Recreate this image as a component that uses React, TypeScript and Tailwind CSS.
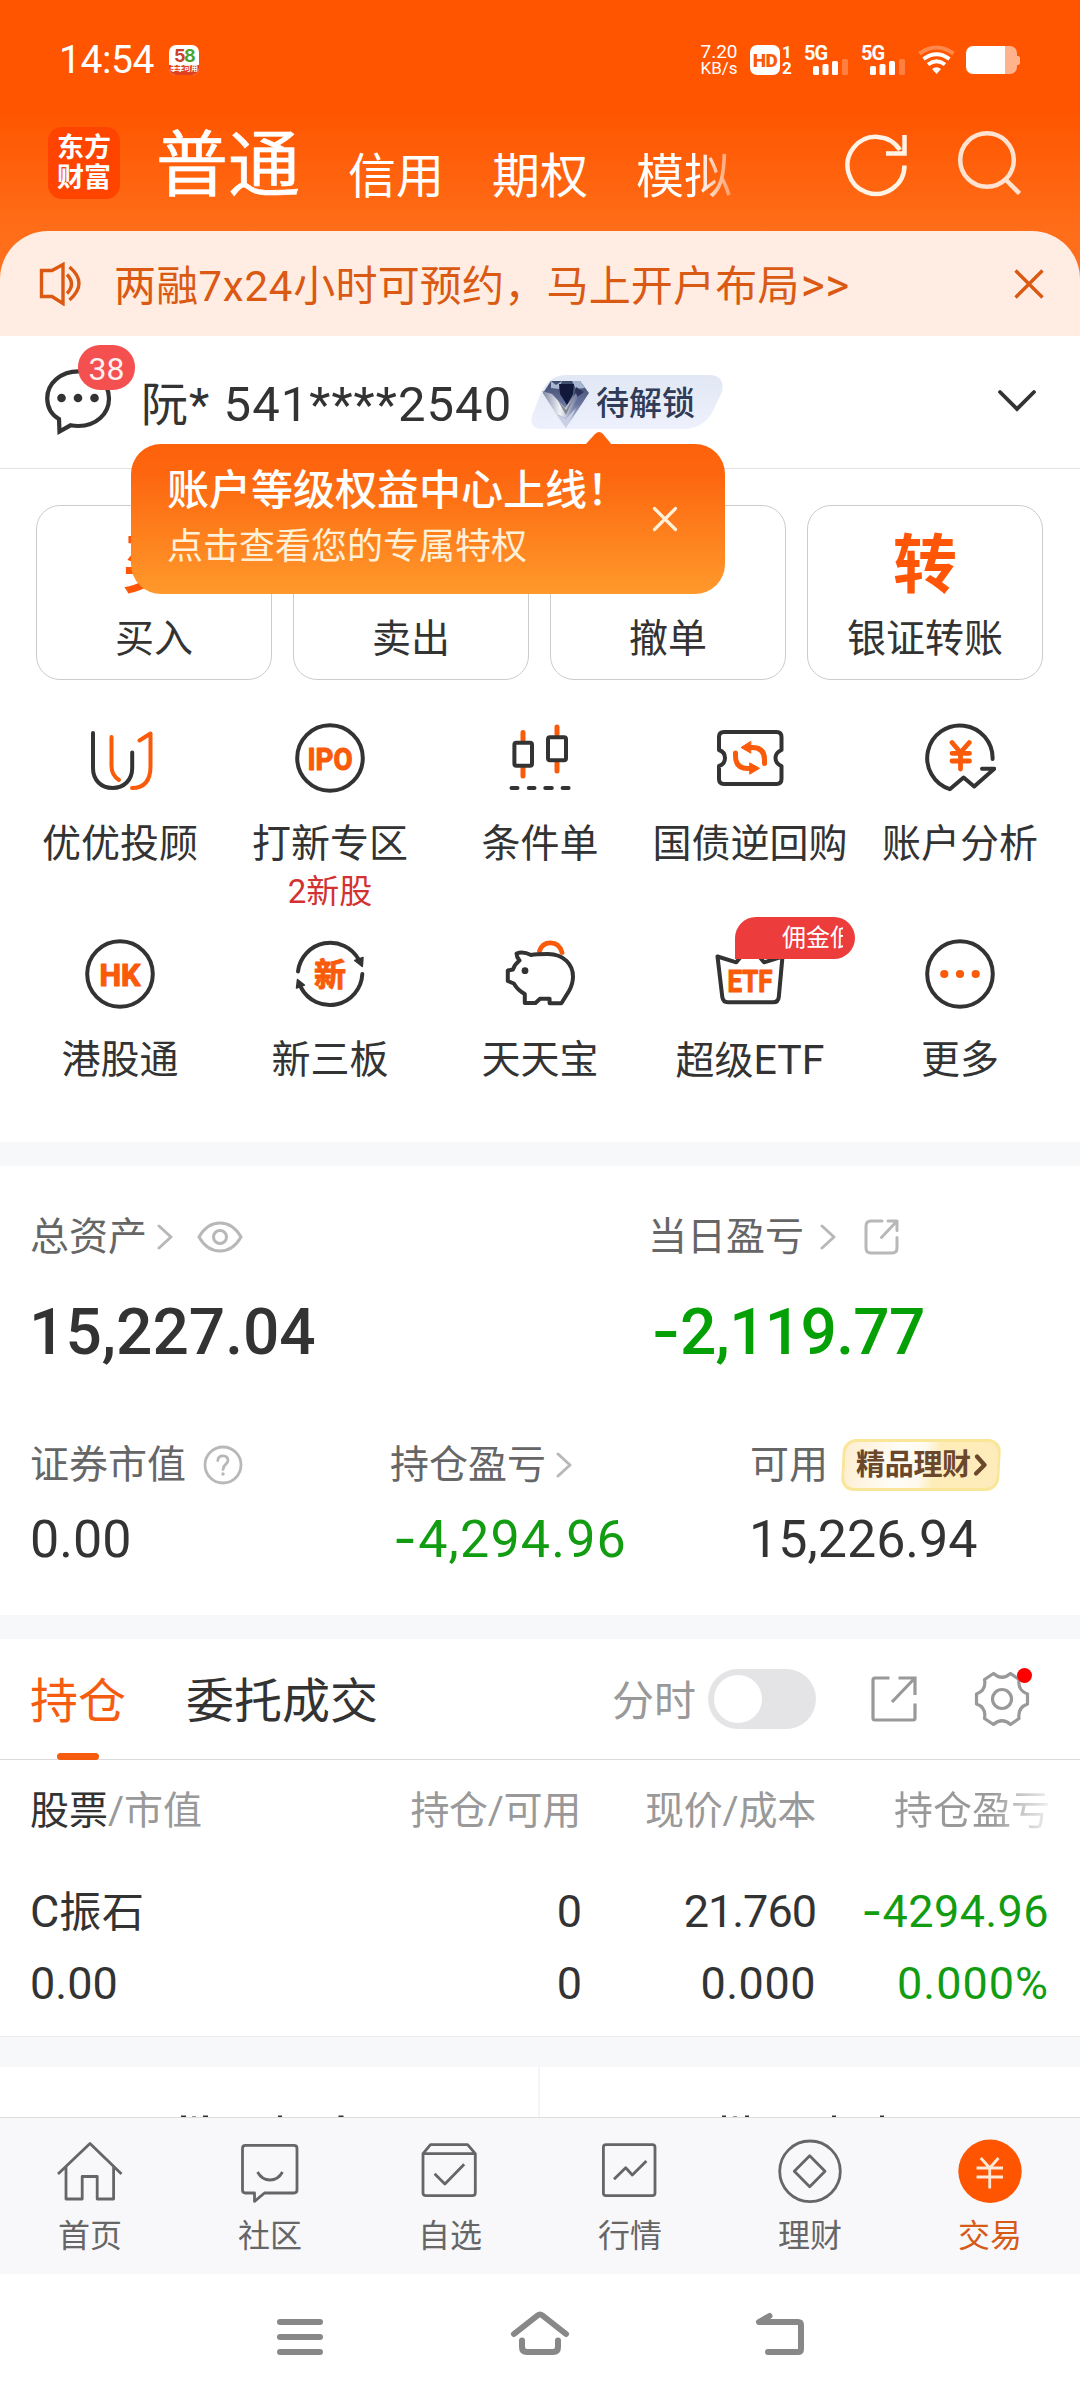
import type { ReactNode } from "react";

const DARK = "#333333";
const ORANGE = "#f95b0b";

/* Amounts: the minus sign is set in a face with a wider hyphen. */
function Amount({ value }: { value: string }) {
  if (!value.startsWith("-")) return <>{value}</>;
  return (
    <>
      <span className="font-[Inter] leading-none">-</span>
      {value.slice(1)}
    </>
  );
}

function Chevron({ className = "" }: { className?: string }) {
  return (
    <svg className={className} width="16" height="26" viewBox="0 0 16 26" fill="none" stroke="#b8b8b8" strokeWidth="3" strokeLinecap="round" strokeLinejoin="round">
      <path d="M2 2 14 13 2 24" />
    </svg>
  );
}

/* ---------- status bar ---------- */

function Signal() {
  return (
    <div className="relative h-[30px] w-[44px]">
      <span className="absolute left-0 top-0 text-[20px] font-bold leading-[16px] tracking-[-1px]">5G</span>
      <svg className="absolute left-0 top-0" width="44" height="30" viewBox="0 0 44 30" fill="#fff">
        <rect x="9" y="21" width="6" height="9" rx="1.5" />
        <rect x="18.5" y="19" width="6" height="11" rx="1.5" />
        <rect x="28" y="16" width="6" height="14" rx="1.5" />
        <rect x="38" y="14" width="6" height="16" rx="1.5" opacity=".25" />
      </svg>
    </div>
  );
}

function StatusBar() {
  return (
    <div className="flex h-[120px] items-center pl-[59px] pr-[60px] text-white">
      <span className="text-[39px] leading-[40px] tracking-[-0.4px]">14:54</span>
      <div className="ml-[15px] flex h-[30px] w-[30px] flex-col items-center overflow-hidden rounded-[7px] bg-white">
        <div className="h-[20px] font-[Inter] text-[18px] font-bold leading-[21px] tracking-[-1.5px]">
          <span className="text-[#c8402f]">5</span>
          <span className="text-[#4aa52e]">8</span>
        </div>
        <div className="h-[10px] w-full whitespace-nowrap bg-[#e0401f] text-center text-[7px] font-bold leading-[9px]">季季可用</div>
      </div>
      <div className="ml-auto flex items-center">
        <div className="flex w-[36px] flex-col items-center text-[19px] leading-[17px]">
          <span>7.20</span>
          <span className="text-[17px]">KB/s</span>
        </div>
        <div className="ml-[13px] flex items-center">
          <span className="flex h-[30px] w-[30px] items-center justify-center rounded-[7px] bg-white text-[19px] font-black leading-none tracking-[-0.5px] text-[#f95b0b]">HD</span>
          <span className="ml-[2px] flex w-[10px] flex-col text-[17px] font-bold leading-[16px]">
            <span>1</span>
            <span>2</span>
          </span>
        </div>
        <div className="ml-[12px]"><Signal /></div>
        <div className="ml-[13px]"><Signal /></div>
        <svg className="ml-[13px]" width="37" height="30" viewBox="0 0 37 30" fill="none" stroke="#fff" strokeWidth="4">
          <path d="M1.5 8.5Q18.5-3.5 35.5 8.5" opacity=".3" />
          <path d="M5.5 14Q18.5 4.500 31.500 14" />
          <path d="M10 19.500Q18.500 13 27 19.500" />
          <path d="M14 24Q18.500 20.500 23 24L18.500 29Z" fill="#fff" stroke="none" />
        </svg>
        <svg className="ml-[11px]" width="54" height="28" viewBox="0 0 54 28" fill="#fff">
          <path d="M38 0h6a7 7 0 0 1 7 7v14a7 7 0 0 1-7 7h-6zM51 10h1q2 0 2 2v5q0 2-2 2h-1z" opacity=".55" />
          <path d="M7 0h32v28H7a7 7 0 0 1-7-7V7a7 7 0 0 1 7-7z" />
        </svg>
      </div>
    </div>
  );
}

/* ---------- header ---------- */

function Header() {
  return (
    <header className="h-[336px] shrink-0 bg-[linear-gradient(180deg,#ff5500_0px,#ff5500_110px,#ff6d18_228px,#ff7020_300px)]">
      <StatusBar />
      <div className="flex h-[111px] items-start pl-[48px] pr-[59px] text-white">
        <div className="mt-[7px] flex h-[72px] w-[72px] flex-col items-center justify-center rounded-[14px] bg-[#ff4400] text-[27px] font-bold leading-[30px]">
          <span>东方</span>
          <span>财富</span>
        </div>
        <span className="ml-[36px] mt-[10px] text-[72px] leading-[72px] [-webkit-text-stroke:0.6px_#fff]">普通</span>
        <div className="ml-[48px] mt-[33px] flex gap-[48px] text-[48px] leading-[48px]">
          <span>信用</span>
          <span>期权</span>
          <span className="bg-[linear-gradient(90deg,#fff_0px,#fff_62px,rgba(255,255,255,0.35)_96px)] bg-clip-text text-transparent">模拟</span>
        </div>
        <svg className="ml-auto mt-[12px]" width="64" height="66" viewBox="0 0 64 66" fill="none" stroke="#fff3e6" strokeWidth="4.500">
          <path d="M59.500 33.500A28.500 28.500 0 1 1 55 18" />
          <path d="M59.500 3V21.500H41" />
        </svg>
        <svg className="ml-[48px] mt-[9px]" width="64" height="66" viewBox="0 0 64 66" fill="none" stroke="#ffe2cf" strokeWidth="4.500">
          <circle cx="30" cy="31" r="26.800" />
          <path d="M48.500 50.500 62.500 64.500" />
        </svg>
      </div>
      <div className="flex h-[105px] items-center rounded-t-[48px] bg-[#ffede4] pl-[39px] pr-[35px] text-[#da5a13]">
        <svg width="43" height="44" viewBox="0 0 43 44" fill="none" stroke="currentColor" strokeWidth="3.400">
          <path d="M2.500 8.500H13L24 2.500V41.500L13 34.500H2.500Z" />
          <path d="M28 12.500Q37 22 28 31.500" />
          <path d="M30.500 5Q49.500 21 30.500 38" />
        </svg>
        <span className="ml-[32px] mt-[4px] whitespace-nowrap text-[42px] leading-[48px] tracking-[0.2px]">
          两融<span className="tracking-[0.8px]">7x24</span>小时可预约，马上开户布局<span className="ml-[1px] text-[46px] tracking-[0.6px]">&gt;&gt;</span>
        </span>
        <svg className="ml-auto" width="32" height="32" viewBox="0 0 32 32" fill="none" stroke="currentColor" strokeWidth="3.400">
          <path d="M2.500 2.500 29.500 29.500M29.500 2.500 2.500 29.500" />
        </svg>
      </div>
    </header>
  );
}

/* ---------- account row ---------- */

function Diamond() {
  return (
    <svg width="48" height="48" viewBox="0 0 48 48">
      <defs>
        <linearGradient id="gem" x1="0" y1="0" x2="0" y2="1">
          <stop offset="0" stopColor="#3d4a6b" />
          <stop offset=".5" stopColor="#6a76a0" />
          <stop offset="1" stopColor="#e4e7f6" />
        </linearGradient>
        <linearGradient id="vee" x1="0" y1="0" x2="1" y2="0">
          <stop offset="0" stopColor="#7b839f" />
          <stop offset=".5" stopColor="#f2f3f6" />
          <stop offset="1" stopColor="#6a719b" />
        </linearGradient>
      </defs>
      <path d="M9 1H38L47 13 24 48 1 13Z" fill="url(#gem)" />
      <path d="M9 1 14 5 20 1 17 9 9 8ZM30 1 38 1 43 8 34 9Z" fill="#a9b6d2" />
      <path d="M17 4H32L31 14 25 25 18 14Z" fill="#11183a" />
      <path d="M34 7 42 12 31 20Z" fill="#2c3458" />
      <path d="M0 11 10 14 23 28 34 13 36 18 24 38 14 34Z" fill="url(#vee)" />
      <path d="M15 19 24 30 34 13 24 35Z" fill="#83878f" />
      <path d="M14 34 24 39 34 28 24 48Z" fill="#c9cfe6" />
    </svg>
  );
}

function Tooltip() {
  return (
    <div className="absolute left-[131px] top-[108px] z-10 flex h-[150px] w-[594px] rounded-[30px] bg-[linear-gradient(180deg,#fd620b_0%,#fd660f_20%,#ff992b_100%)] pl-[36px] pt-[23px] text-white">
      <svg className="absolute left-[452px] top-[-13px]" width="32" height="14" viewBox="0 0 32 14" fill="#fd620b">
        <path d="M2 14 12 3Q16-1 20 3L29 14Z" />
      </svg>
      <div className="flex flex-col">
        <span className="text-[42px] font-medium leading-[48px]">账户等级权益中心上线！</span>
        <span className="mt-[10px] text-[36px] leading-[44px] text-[#fff0d8]">点击查看您的专属特权</span>
      </div>
      <svg className="absolute left-[521px] top-[62px]" width="26" height="26" viewBox="0 0 26 26" stroke="#fff0d8" strokeWidth="3.200" strokeLinecap="round">
        <path d="M2.500 2.500 23.500 23.500M23.500 2.500 2.500 23.500" />
      </svg>
    </div>
  );
}

function AccountRow() {
  return (
    <section className="relative flex h-[133px] shrink-0 items-start border-b border-[#e2e2e2] bg-white pl-[44px] pr-[43px]">
      <div className="relative mt-[32px] h-[68px] w-[68px]">
        <svg width="68" height="68" viewBox="0 0 68 68" fill="none" stroke={DARK} strokeWidth="4.200">
          <path d="M34.500 3.300C52 3.300 65 15 65 30.500S52 58 34.500 58Q30 58 26.500 57.300L15.500 63.500 15 51Q3.500 44.500 3.200 30.500C3.200 15 17 3.300 34.500 3.300Z" />
          <g fill={DARK} stroke="none">
            <circle cx="17.500" cy="30" r="4.300" />
            <circle cx="34" cy="30" r="4.300" />
            <circle cx="50.500" cy="30" r="4.300" />
          </g>
        </svg>
        <span className="absolute left-[34px] top-[-23px] flex h-[45px] w-[57px] items-center justify-center rounded-[22px] bg-[#f55050] pt-[2px] text-[32px] leading-none text-[#fff0f0]">38</span>
      </div>
      <span className="ml-[29px] mt-[45px] w-[371px] whitespace-pre text-[47px] leading-[48px] tracking-[1.05px] text-[#333]">
        阮*<span className="text-[49px]"> 541****2540</span>
      </span>
      <div className="relative ml-[19px] mt-[39px] h-[54px] w-[192px]">
        <svg className="absolute inset-0" width="192" height="54" viewBox="0 0 192 54">
          <defs>
            <linearGradient id="tag" x1="0" y1="0" x2="0" y2="1">
              <stop offset="0" stopColor="#e1e7f4" />
              <stop offset="1" stopColor="#eef1fd" />
            </linearGradient>
          </defs>
          <path d="M36 0H178Q194 0 191 17L181 38Q171 54 152 54H12Q-2 54 1 41L9 20Q17 0 36 0Z" fill="url(#tag)" />
        </svg>
        <div className="relative flex items-center pl-[11px] pt-[5px]">
          <Diamond />
          <span className="ml-[6px] text-[33px] font-medium leading-[46px] text-[#2f3b57]">待解锁</span>
        </div>
      </div>
      <svg className="ml-auto mt-[53px]" width="40" height="24" viewBox="0 0 40 24" fill="none" stroke={DARK} strokeWidth="3.800" strokeLinecap="round">
        <path d="M3 3 20 20 37 3" />
      </svg>
      <Tooltip />
    </section>
  );
}

/* ---------- quick actions ---------- */

const ACTIONS = [
  { glyph: "买", label: "买入" },
  { glyph: "卖", label: "卖出" },
  { glyph: "撤", label: "撤单" },
  { glyph: "转", label: "银证转账" },
];

function Glyph({ children }: { children: ReactNode }) {
  return (
    <svg width="72" height="72" viewBox="0 0 72 72" fill="none" stroke={DARK} strokeWidth="4" strokeLinecap="round" strokeLinejoin="round">
      {children}
    </svg>
  );
}

function IconWord({ word, width, y = 47.5 }: { word: string; width: number; y?: number }) {
  return (
    <text x={36 - width / 2} y={y} textLength={width} lengthAdjust="spacingAndGlyphs" fill={ORANGE} stroke={ORANGE} strokeWidth="1.2" className="text-[31px] font-bold">
      {word}
    </text>
  );
}

const FEATURES: { label: ReactNode; id: string; note?: string; badge?: string; icon: ReactNode }[] = [
  {
    id: "advisor",
    label: "优优投顾",
    icon: (
      <>
        <path d="M9 11V46C9 58 17 66 28.500 66S48.200 58 48.200 46V30.500" />
        <path stroke={ORANGE} d="M27.500 15V44Q27.500 53 35 58M55.500 18.500 66.500 11.500V44Q66.500 66 48 66" />
      </>
    ),
  },
  {
    id: "ipo",
    label: "打新专区",
    note: "2新股",
    icon: (
      <>
        <circle cx="36" cy="36" r="32.800" />
        <IconWord word="IPO" width={45} />
      </>
    ),
  },
  {
    id: "conditional",
    label: "条件单",
    icon: (
      <>
        <path stroke={ORANGE} strokeWidth="5" d="M19 10.500V18M19 46V54M53 5V12M53 41V49" />
        <rect x="10.400" y="20.700" width="17.600" height="23" rx="2" />
        <rect x="44" y="15.300" width="18" height="23" rx="2" />
        <path d="M7.500 66H13.500M24.800 66H30.500M41.300 66H47.800M58.600 66H64.600" />
      </>
    ),
  },
  {
    id: "repo",
    label: "国债逆回购",
    icon: (
      <>
        <path d="M5 15Q5 10 10 10H62.500Q67.500 10 67.500 15V28Q61.500 30.500 61.500 36T67.500 44V57Q67.500 62 62.500 62H10Q5 62 5 57V44Q11 42 11 36T5 28Z" />
        <path stroke={ORANGE} strokeWidth="5" d="M21.500 31V34Q21.500 46.500 34 46.500H38M50.500 41.500V37.500Q50.500 25.500 38 25.500H35" />
        <path stroke={ORANGE} strokeWidth="1" fill={ORANGE} d="M36 41 45.500 46.300 36 52ZM36.500 19.500 27 25.500 36.500 31Z" />
      </>
    ),
  },
  {
    id: "analysis",
    label: "账户分析",
    icon: (
      <>
        <path d="M68.600 37A32.700 32.700 0 1 0 25.800 67.200L39.600 55.500 50.200 64.500 70.300 46.700H58" />
        <path stroke={ORANGE} strokeWidth="4.800" d="M28 20.500 36.500 30.500 45.300 20.500M36.500 30.500V47M28 31.300H45.500M28 39H45.500" />
      </>
    ),
  },
  {
    id: "hk",
    label: "港股通",
    icon: (
      <>
        <circle cx="36" cy="36" r="32.800" />
        <IconWord word="HK" width={41} />
      </>
    ),
  },
  {
    id: "neeq",
    label: "新三板",
    icon: (
      <>
        <path d="M4 33.500A32.500 32.500 0 0 1 65 22M68.300 36A32.500 32.500 0 0 1 7 49.500" />
        <path strokeWidth="1.500" fill={DARK} d="M60.700 22.500 69 19.500 68.300 28.500ZM3.500 41.500 10.400 47 2.500 50Z" />
        <text x="36" y="47.500" textAnchor="middle" fill={ORANGE} stroke={ORANGE} strokeWidth="1" className="text-[32px] font-bold">新</text>
      </>
    ),
  },
  {
    id: "cash",
    label: "天天宝",
    icon: (
      <>
        <path stroke={ORANGE} strokeWidth="4.800" d="M35.500 13Q38 4.800 46.500 4.800 55.500 4.800 58 14.500" />
        <path d="M12.500 15.500Q19 13 27 17 32 16 44 16C60 16 69 27 69 38.500Q69 46 65 53L57.400 65.300H45.600V60.700H36L31.500 65H20.800V56Q14 52.500 9.800 45.500L3.800 43V32.500L9 31.500Q10.500 26.500 15.500 22.500 12.500 19 12.500 15.500Z" />
        <circle cx="21" cy="32.700" r="3.400" fill={DARK} stroke="none" />
      </>
    ),
  },
  {
    id: "etf",
    label: <>超级<span className="text-[41px]">ETF</span></>,
    badge: "佣金低",
    icon: (
      <>
        <path d="M3.500 18.500 22.300 24.300 29 16H43L50 24.300 68.500 18.500 64.800 59Q64.300 64.300 59 64.300H14Q9 64.300 8.300 59Z" />
        <IconWord word="ETF" width={45} y={53.5} />
      </>
    ),
  },
  {
    id: "more",
    label: "更多",
    icon: (
      <>
        <circle cx="36" cy="36" r="32.800" />
        <g fill={ORANGE} stroke="none">
          <circle cx="20.300" cy="36" r="4.100" />
          <circle cx="36" cy="36" r="4.100" />
          <circle cx="51.700" cy="36" r="4.100" />
        </g>
      </>
    ),
  },
];

function QuickActions() {
  return (
    <section className="h-[673px] shrink-0 bg-white pt-[36px] text-[#333]">
      <div className="grid grid-cols-4 gap-[21px] pl-[36px] pr-[37px]">
        {ACTIONS.map((a) => (
          <div key={a.label} className="flex h-[175px] flex-col items-center rounded-[24px] border border-[#cccccc] pt-[28px]">
            <span className="text-[64px] font-bold leading-[64px] text-[#ff5506]">{a.glyph}</span>
            <span className="mt-[21px] text-[39px] leading-[40px]">{a.label}</span>
          </div>
        ))}
      </div>
      <div className="mt-[42px] grid grid-cols-5 grid-rows-[216px_204px] px-[15px]">
        {FEATURES.map((f) => (
          <div key={f.id} className="relative flex flex-col items-center">
            <Glyph>{f.icon}</Glyph>
            <span className="mt-[30px] whitespace-nowrap text-[39px] leading-[40px]">{f.label}</span>
            {f.note && <span className="mt-[10px] text-[33px] leading-[36px] text-[#d23232]">{f.note}</span>}
            {f.badge && (
              <div className="absolute left-[90px] top-[-21px] flex h-[42px] w-[120px] items-center rounded-[21px] rounded-bl-none bg-[#ec3c3c] pl-[47px] text-white">
                <span className="w-[61px] overflow-hidden whitespace-nowrap text-[24px] leading-[30px]">{f.badge}</span>
              </div>
            )}
          </div>
        ))}
      </div>
    </section>
  );
}

/* ---------- assets ---------- */

function Assets() {
  return (
    <section className="h-[449px] shrink-0 bg-white pl-[30px] pt-[51px] text-[#333]">
      <div className="flex">
        <div className="w-[618px]">
          <div className="flex h-[40px] items-center text-[39px] leading-[40px] text-[#666]">
            总资产
            <Chevron className="ml-[10px]" />
            <svg className="ml-[24px]" width="46" height="34" viewBox="0 0 46 34" fill="none" stroke="#b8b8b8" strokeWidth="3">
              <path d="M2 17Q10 3 23 3T44 17Q36 31 23 31T2 17Z" />
              <circle cx="23" cy="17" r="6.500" />
            </svg>
          </div>
          <div className="-ml-[1px] mt-[40px] text-[64px] font-medium leading-[72px]">15,227.04</div>
        </div>
        <div>
          <div className="flex h-[40px] items-center text-[39px] leading-[40px] text-[#666]">
            当日盈亏
            <Chevron className="ml-[16px]" />
            <svg className="ml-[28px]" width="36" height="36" viewBox="0 0 36 36" fill="none" stroke="#b8b8b8" strokeWidth="3" strokeLinecap="round" strokeLinejoin="round">
              <path d="M18 2H7Q2 2 2 7V29Q2 34 7 34H28Q33 34 33 29V18.500M24 2H33V11.500M33 2 17.500 18.500" />
            </svg>
          </div>
          <div className="ml-[3px] mt-[40px] text-[64px] font-medium leading-[72px] tracking-[-0.7px] text-[#05a005]"><Amount value="-2,119.77" /></div>
        </div>
      </div>
      <div className="mt-[70px] flex">
        <div className="w-[360px]">
          <div className="flex h-[52px] items-center text-[39px] leading-[40px] text-[#666]">
            证券市值
            <svg className="ml-[17px]" width="40" height="40" viewBox="0 0 40 40" fill="none" stroke="#b8b8b8" strokeWidth="2.800" strokeLinecap="round">
              <circle cx="20" cy="20" r="18" />
              <path d="M14.800 15.500Q15.200 10.800 20 10.800T25 15.500C25 19 20 19.500 20 24.500" />
              <circle cx="20" cy="29" r="1" fill="#b8b8b8" strokeWidth="1.500" />
            </svg>
          </div>
          <div className="mt-[19px] text-[52px] leading-[60px]">0.00</div>
        </div>
        <div className="w-[360px]">
          <div className="flex h-[52px] items-center text-[39px] leading-[40px] text-[#666]">
            持仓盈亏
            <Chevron className="ml-[10px]" />
          </div>
          <div className="ml-[3px] mt-[19px] text-[52px] leading-[60px] tracking-[1.2px] text-[#129c12]"><Amount value="-4,294.96" /></div>
        </div>
        <div>
          <div className="flex h-[52px] items-center text-[39px] leading-[40px] text-[#666]">
            可用
            <div className="ml-[14px] flex h-[52px] w-[158px] -skew-x-3 items-center rounded-[13px] border-[3px] border-[#fae698] bg-[linear-gradient(100deg,#fdeed0_0%,#fffdf8_35%,#fffaf0_50%,#feedb8_60%,#feebbb_100%)] pl-[11px]">
              <span className="skew-x-3 text-[29px] font-bold leading-[40px] tracking-[-0.3px] text-[#6b472b]">精品理财</span>
              <svg className="ml-[3px]" width="14" height="22" viewBox="0 0 14 22" fill="none" stroke="#6b472b" strokeWidth="4.200" strokeLinecap="round" strokeLinejoin="round">
                <path d="M2.500 2.500 10.500 11 2.500 19.500" />
              </svg>
            </div>
          </div>
          <div className="-ml-[1px] mt-[19px] text-[52px] leading-[60px]">15,226.94</div>
        </div>
      </div>
    </section>
  );
}

/* ---------- holdings ---------- */

function HoldingRow({ name, held, price, profit }: { name: ReactNode; held: string; price: ReactNode; profit: ReactNode }) {
  return (
    <div className="flex h-[54px] pl-[30px] text-[45px] leading-[54px]">
      <span className="w-[310px]">{name}</span>
      <span className="w-[242px] text-right">{held}</span>
      <span className="w-[234px] text-right">{price}</span>
      <span className="w-[233px] text-right text-[#129c12]">{profit}</span>
    </div>
  );
}

function Holdings() {
  return (
    <section className="h-[398px] shrink-0 border-b border-[#ebebee] bg-white text-[#333]">
      <div className="flex h-[121px] items-center border-b border-[#dcdcdc] pl-[30px] pr-[48px]">
        <div className="relative flex h-full items-center text-[48px] leading-[56px] text-[#f55c10]">
          <span className="pt-[5px]">持仓</span>
          <span className="absolute bottom-[-1px] left-[27px] h-[7px] w-[42px] rounded-full bg-[#f55c10]" />
        </div>
        <span className="ml-[60px] pt-[5px] text-[48px] leading-[56px]">委托成交</span>
        <span className="ml-auto pt-[5px] text-[42px] leading-[48px] text-[#999]">分时</span>
        <div className="ml-[12px] flex h-[60px] w-[108px] items-center rounded-full bg-[#e4e4e6] pl-[6px]">
          <div className="h-[48px] w-[48px] rounded-full bg-white" />
        </div>
        <svg className="ml-[54px]" width="48" height="48" viewBox="0 0 48 48" fill="none" stroke="#999" strokeWidth="3.200">
          <path d="M19.500 3H5Q3 3 3 5V43Q3 45 5 45H43Q45 45 45 43V28.500M28.500 3H45V20M44 4 22 27" />
        </svg>
        <div className="relative ml-[54px] h-[60px] w-[60px]">
          <svg className="absolute left-0 top-0" width="60" height="60" viewBox="0 0 60 60" fill="none" stroke="#999" strokeWidth="3.200" strokeLinejoin="round">
            <path d="M21.500 4.500Q30 12 38.500 4.500L47 10.500Q45.500 21.500 55.500 25V35Q45.500 38.500 47 49.500L38.500 55.500Q30 48 21.500 55.500L12.500 49.500Q14.500 38.500 4.500 35V25Q14.500 21.500 12.500 10.500Z" />
            <circle cx="30" cy="30" r="9.500" />
          </svg>
          <span className="absolute left-[45px] top-[-1px] h-[15px] w-[15px] rounded-full bg-[#ff0000]" />
        </div>
      </div>
      <div className="mt-[31px] flex pl-[30px] text-[39px] leading-[40px] text-[#999]">
        <span className="w-[310px]"><span className="text-[#333]">股票</span>/市值</span>
        <span className="w-[241px] text-right tracking-[-0.3px]">持仓/可用</span>
        <span className="w-[235px] text-right tracking-[-0.2px]">现价/成本</span>
        <span className="w-[234px] bg-[linear-gradient(90deg,#999_0px,#999_175px,#f2f2f2_235px)] bg-clip-text text-right text-transparent">持仓盈亏</span>
      </div>
      <div className="mt-[54px] flex flex-col gap-[18px]">
        <HoldingRow
          name={<>C<span className="text-[42px] tracking-[0.6px]">振石</span></>}
          held="0"
          price={<span className="tracking-[-1px]">21.760</span>}
          profit={<span className="tracking-[0.4px]"><Amount value="-4294.96" /></span>}
        />
        <HoldingRow
          name="0.00"
          held="0"
          price={<span className="tracking-[0.5px]">0.000</span>}
          profit={<span className="tracking-[1px]">0.000%</span>}
        />
      </div>
    </section>
  );
}

/* Two-column panel whose captions begin just below the fold. */
function BottomPanel() {
  return (
    <section className="flex h-[50px] shrink-0 items-end bg-white">
      <svg className="h-[50px] w-[540px] border-r-2 border-[#f4f4f6]" viewBox="0 0 538 50" preserveAspectRatio="none" fill="#333">
        <path d="M181 48.500h5v1.500h-5zM203 48.500h5v1.500h-5zM278 48.500h4v1.500h-4zM338.500 48.500h5v2h-5z" />
        <path d="M192 49h4v1h-4z" opacity=".5" />
      </svg>
      <svg className="h-[50px] w-[540px]" viewBox="0 0 540 50" preserveAspectRatio="none" fill="#333">
        <path d="M182 48.500h4v1.500h-4zM205 48.500h4v1.500h-4zM292 48.500h4v1.500h-4zM340 48.500h4v1.500h-4z" />
        <path d="M193 49h4v1h-4z" opacity=".5" />
      </svg>
    </section>
  );
}

/* ---------- bottom bars ---------- */

const TABS: { label: string; active?: boolean; icon: ReactNode }[] = [
  {
    label: "首页",
    icon: <path d="M4 39 36 8.500 67.500 39M12 32V64H28.200V41.500H43.200V64H59.600V32" />,
  },
  {
    label: "社区",
    icon: <path d="M11.500 10.300H60Q63 10.300 63 13.300V55Q63 58 60 58H30.500L20.500 66.300V58H11.500Q8.500 58 8.500 55V13.300Q8.500 10.300 11.500 10.300ZM23.500 37Q28 45 36 45T48.500 37" />,
  },
  {
    label: "自选",
    icon: <path d="M9 18.700 16.500 9.700H53.600L61.300 18.700ZM9 18.700V57.700Q9 60.700 12 60.700H58.300Q61.300 60.700 61.300 57.700V18.700M20.600 38.700 30.900 49 50.200 29.300" />,
  },
  {
    label: "行情",
    icon: <path d="M12 9.700H58.300Q61 9.700 61 12.400V58Q61 60.700 58.300 60.700H12Q9.400 60.700 9.400 58V12.400Q9.400 9.700 12 9.700ZM20 44.300 31.700 32.700 38.300 40 52.400 26" />,
  },
  {
    label: "理财",
    icon: (
      <>
        <circle cx="36" cy="36.300" r="30.300" />
        <path d="M35.700 20.800 51 36.300 35.700 51.800 20.300 36.300Z" />
      </>
    ),
  },
  {
    label: "交易",
    active: true,
    icon: (
      <>
        <circle cx="36" cy="36.300" r="31.700" fill="#ff5500" stroke="none" />
        <path stroke="#ffe8d6" d="M26.800 23 35.700 33 44.500 23M22.500 33H49M22.500 42H49M35.700 33V53.500" />
      </>
    ),
  },
];

function TabBar() {
  return (
    <nav className="grid h-[157px] shrink-0 grid-cols-6 border-t border-[#dedede] bg-[#f8f8fb]">
      {TABS.map((t) => (
        <div key={t.label} className={t.active ? "flex flex-col items-center pt-[17px] text-[#d65b17]" : "flex flex-col items-center pt-[17px] text-[#666]"}>
          <svg width="72" height="72" viewBox="0 0 72 72" fill="none" stroke="#666" strokeWidth="2.800" strokeLinejoin="round">
            {t.icon}
          </svg>
          <span className="mt-[11px] text-[32px] leading-[36px]">{t.label}</span>
        </div>
      ))}
    </nav>
  );
}

function SystemNav() {
  return (
    <div className="flex h-[126px] shrink-0 items-start justify-center gap-[180px] bg-white pt-[33px]">
      <svg width="60" height="60" viewBox="0 0 60 60" stroke="#888" strokeWidth="6" strokeLinecap="round">
        <path d="M10 15H50M10 30H50M10 45H50" />
      </svg>
      <svg width="60" height="60" viewBox="0 0 60 60" fill="none" stroke="#888" strokeWidth="6" strokeLinecap="round" strokeLinejoin="round">
        <path d="M4 27 27.500 8.500Q30 6.500 32.500 8.500L56 27M12 33.500V40Q12 45 17 45H43Q48 45 48 40V33.500" />
      </svg>
      <svg width="60" height="60" viewBox="0 0 60 60" fill="none" stroke="#888" strokeWidth="6" strokeLinecap="round" strokeLinejoin="round">
        <path d="M19.500 9 9 15H48Q51 15 51 18V42Q51 45 48 45H18" />
      </svg>
    </div>
  );
}

export default function App() {
  return (
    <main className="flex h-[2400px] w-[1080px] flex-col overflow-hidden bg-[#f7f8fa] font-[Roboto,'Noto_Sans_CJK_SC',sans-serif]">
      <Header />
      <AccountRow />
      <QuickActions />
      <div className="h-[24px] shrink-0" />
      <Assets />
      <div className="h-[24px] shrink-0" />
      <Holdings />
      <div className="h-[30px] shrink-0" />
      <BottomPanel />
      <TabBar />
      <SystemNav />
    </main>
  );
}
